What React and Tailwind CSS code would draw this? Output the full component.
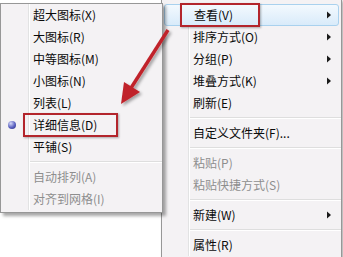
import React from "react";

function Arrow() {
  return (
    <svg width="6" height="8" viewBox="0 0 6 8" className="shrink-0">
      <path d="M1 0.5 L5 4 L1 7.5 Z" fill="#1a1a1a" />
    </svg>
  );
}

function Item({ label, disabled, arrow, radio, gw }) {
  return (
    <div className="flex h-[22px]">
      <div
        className={`${gw} flex items-center border-r border-[#e2e3e3] pl-[7px]`}
      >
        {radio && (
          <div className="h-[8px] w-[8px] rounded-full bg-[radial-gradient(circle_at_35%_30%,#d6daf8,#5a60c0_55%,#262a7a)]" />
        )}
      </div>
      <div
        className={`flex flex-1 items-center justify-between border-l border-white pl-[3px] pr-[9px] ${
          disabled ? "text-[#8e8e8e]" : "text-[#0a0a0a]"
        }`}
      >
        <span>{label}</span>
        {arrow && <Arrow />}
      </div>
    </div>
  );
}

function Sep({ gw }) {
  return (
    <div className="flex h-[8px]">
      <div className={`${gw} border-r border-[#e2e3e3]`} />
      <div className="flex flex-1 flex-col justify-center border-l border-white">
        <div className="h-px bg-[#dedede]" />
        <div className="h-px bg-white" />
      </div>
    </div>
  );
}

export default function App() {
  const L = "w-[28px]";
  const R = "w-[27px]";
  return (
    <div className="relative h-[257px] w-[343px] overflow-hidden bg-white font-['Microsoft_YaHei','Noto_Sans_CJK_SC',sans-serif] text-[12px] leading-none">
      {/* right context menu */}
      <div className="absolute left-[161px] top-[-1px] w-[181px] border border-[#979797] bg-[#f4f2f4] pb-[10px] pt-[4px] shadow-[2px_2px_3px_rgba(0,0,0,0.3)]">
        <div className="mx-[2px] flex h-[22px] items-center justify-between rounded-[3px] border border-[#a9d1ee] bg-gradient-to-b from-[#f3f9fe] to-[#d9ebfa] pl-[29px] pr-[6px] text-[#0a0a0a]">
          <span>查看(V)</span>
          <Arrow />
        </div>
        <Item gw={R} label="排序方式(O)" arrow />
        <Item gw={R} label="分组(P)" arrow />
        <Item gw={R} label="堆叠方式(K)" arrow />
        <Item gw={R} label="刷新(E)" />
        <Sep gw={R} />
        <Item gw={R} label="自定义文件夹(F)..." />
        <Sep gw={R} />
        <Item gw={R} label="粘贴(P)" disabled />
        <Item gw={R} label="粘贴快捷方式(S)" disabled />
        <Sep gw={R} />
        <Item gw={R} label="新建(W)" arrow />
        <Sep gw={R} />
        <Item gw={R} label="属性(R)" />
      </div>

      {/* left submenu */}
      <div className="absolute left-0 top-[3px] w-[163px] border border-[#979797] bg-[#f4f2f4] pb-[2px] shadow-[3px_3px_3px_rgba(0,0,0,0.35)]">
        <Item gw={L} label="超大图标(X)" />
        <Item gw={L} label="大图标(R)" />
        <Item gw={L} label="中等图标(M)" />
        <Item gw={L} label="小图标(N)" />
        <Item gw={L} label="列表(L)" />
        <Item gw={L} label="详细信息(D)" radio />
        <Item gw={L} label="平铺(S)" />
        <Sep gw={L} />
        <Item gw={L} label="自动排列(A)" disabled />
        <Item gw={L} label="对齐到网格(I)" disabled />
      </div>

      {/* annotation boxes */}
      <div className="absolute left-[180px] top-[3px] h-[24px] w-[80px] border-2 border-[#b3252c] shadow-[1px_1px_2px_rgba(0,0,0,0.3)]" />
      <div className="absolute left-[23px] top-[113px] h-[24px] w-[95px] border-2 border-[#b3252c] shadow-[1px_1px_2px_rgba(0,0,0,0.3)]" />

      {/* annotation arrow */}
      <svg
        className="absolute left-0 top-0"
        width="343"
        height="257"
        viewBox="0 0 343 257"
      >
        <defs>
          <filter id="sh" x="-20%" y="-20%" width="140%" height="140%">
            <feDropShadow dx="2" dy="2" stdDeviation="1.5" floodColor="#000" floodOpacity="0.35" />
          </filter>
        </defs>
        <g filter="url(#sh)">
          <line x1="168" y1="30" x2="131" y2="88" stroke="#c0232b" strokeWidth="3.5" />
          <path d="M121 104 L124 82 L140 92 Z" fill="#c0232b" />
        </g>
      </svg>
    </div>
  );
}
